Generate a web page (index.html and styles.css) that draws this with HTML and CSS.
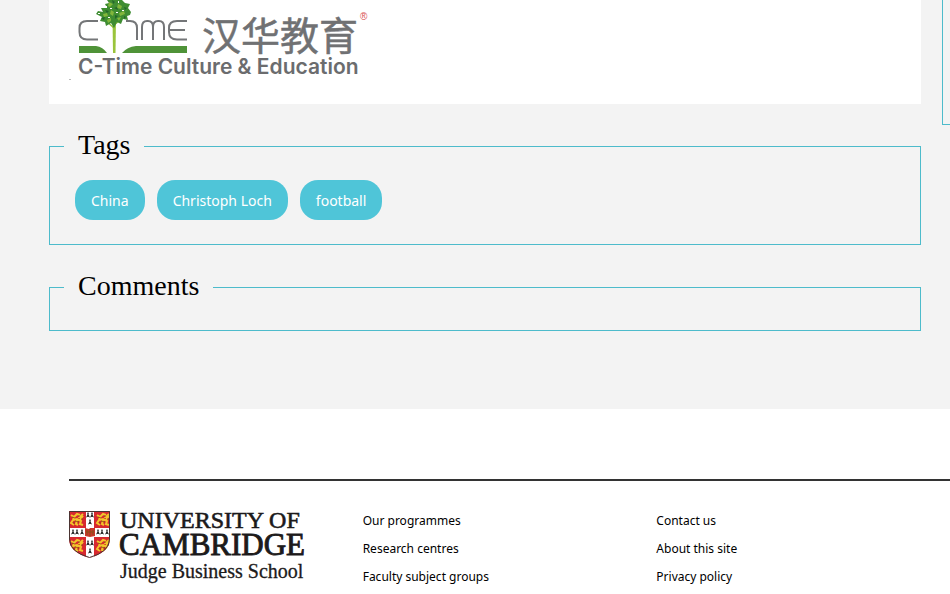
FILE: index.html
```html
<!DOCTYPE html>
<html lang="en">
<head>
<meta charset="utf-8">
<title>Cambridge Judge Business School</title>
<link rel="stylesheet" href="styles.css">
</head>
<body>
<div class="page">
  <main class="article">
    <div class="card">
      <svg class="partner-logo" width="304" height="84" viewBox="66 0 304 84" role="img" aria-label="C-Time Culture &amp; Education">
        <g fill="none" stroke="#747678" stroke-width="2">
          <path d="M98 21H87Q79.500 21 79.500 28V32Q79.500 39.500 87 39.500H98"/>
          <path d="M126 21H130Q137 21 137 28V40"/>
          <path d="M142 40V27Q142 21 147 21H148Q153 21 153 27V40M153 27Q153 21 158 21H159Q164 21 164 27V40"/>
          <path d="M187 21H177Q169 21 169 28V32Q169 39.500 177 39.500H187M169 30H185"/>
        </g>
        <path fill="#4f9338" d="M79 46H96Q103 47 107 53H79ZM187 46H136Q127 47 122 53H187Z"/>
        <path fill="#9ac43c" d="M112.500 18H116L115.500 53H113Z"/>
        <path fill="none" stroke="#8dbb35" stroke-width="1.500" d="M114 28L105 20M114 25L124 17M114 18V3"/>
        <path fill="#3f8d32" d="M107 0H122L125 3L130 4L128 8L131 12L130 15L127 16L128 20L123 19L121 24L117 22L114 28L111 23L106 26L105 22L100 21L102 17L96 14L98 11L103 12L101 8L107 8L105 4L109 3Z"/>
        <g fill="#82b63b">
          <path d="M109 2l4 2-3 3-2-1zM118 4l4 2-1 3-4-1zM103 14l4-1 1 3-4 1zM111 10l3 2-1 4-3-2zM119 13l5-2 1 3-5 2zM107 20l4-2v3l-3 2zM117 18l4-1-2 4z"/>
        </g>
        <g fill="#24662c">
          <path d="M112 0l3 2-2 2zM114 8l3-1 1 3zM105 10l4 1-2 2zM124 7l3 1-2 2zM115 15l3 1-3 3zM101 18l4-1-1 3zM124 16l2 1-2 2z"/>
        </g>
        <g fill="#fff"><path d="M105 6h2v2h-2zM110 8h2v1h-2zM122 10h2v1h-2zM108 17h2v1h-2zM116 12h2v1h-2zM118 1h1v2h-1zM98 13h2v1h-2z"/></g>
        <text class="logo-cjk" x="202" y="50">汉华教育</text>
        <text class="logo-mark" x="360" y="20">®</text>
        <text class="logo-latin" x="78" y="74">C-Time Culture &amp; Education</text>
        <path fill="#bbb" d="M69 79h2v1h-2z"/>
      </svg>
    </div>
    <fieldset class="panel">
      <legend>Tags</legend>
      <ul class="tags">
        <li><a href="#">China</a></li>
        <li><a href="#">Christoph Loch</a></li>
        <li><a href="#">football</a></li>
      </ul>
    </fieldset>
    <fieldset class="panel comments">
      <legend>Comments</legend>
    </fieldset>
  </main>
  <aside class="sidebar"></aside>
</div>
<footer class="footer">
  <div class="footer-grid">
    <a class="brand" href="#">
      <svg width="236" height="81" viewBox="0 -5 236 81" role="img" aria-label="University of Cambridge Judge Business School">
        <defs>
          <clipPath id="shield"><path d="M0 1H41V29Q41 42 20.500 48Q0 42 0 29Z"/></clipPath>
          <g id="lion">
            <path fill="none" stroke="#f3c52b" stroke-width="2" d="M2 3L5 5L4 8L8 7L12 9L11 12L14 13M5 5L8 2L11 3M4 8L2 11L5 13M8 8L7 12L9 13M11 8L13 5L11 5L14 2"/>
            <path fill="none" stroke="#75430f" stroke-width=".7" d="M3 5L6 6M6 9L10 10M9 4L11 4M4 11L6 11M12 7L14 7"/>
          </g>
          <path id="ermine" fill="#222" d="M0-3L.8-1.800L.5-.5L2 2.500L0 1.800L-2 2.500L-.5-.5L-.8-1.800Z"/>
        </defs>
        <g clip-path="url(#shield)">
          <path fill="#d7292f" d="M0 0H42V49H0Z"/>
          <use href="#lion" x="0" y="2"/><use href="#lion" x="26" y="2"/>
          <use href="#lion" x="0" y="28"/><use href="#lion" x="26" y="28"/>
          <path fill="#fff" d="M17 0H25V18H42V27H25V49H17V27H0V18H17Z"/>
          <use href="#ermine" x="19" y="5"/><use href="#ermine" x="23" y="5"/>
          <use href="#ermine" x="21" y="12"/>
          <use href="#ermine" x="4" y="22"/><use href="#ermine" x="8" y="22"/><use href="#ermine" x="13" y="22"/>
          <use href="#ermine" x="29" y="22"/><use href="#ermine" x="33" y="22"/><use href="#ermine" x="38" y="22"/>
          <use href="#ermine" x="19" y="33"/><use href="#ermine" x="23" y="33"/>
          <use href="#ermine" x="21" y="41"/>
          <path fill="#c9372b" d="M16 18L20 19L21 18L26 18V26L21 27L16 26Z"/>
          <path fill="none" stroke="#87501b" d="M18 20V25M21 19V26M24 20V25M17 22H25"/>
        </g>
        <path fill="none" stroke="#4a3432" d="M.5 1.500H40.500V29Q40.500 42 20.500 47.500Q.5 42 .5 29Z"/>
        <text class="brand-top" x="51" y="18">UNIVERSITY OF</text>
        <text class="brand-main" x="50" y="45">CAMBRIDGE</text>
        <text class="brand-sub" x="51" y="68">Judge Business School</text>
      </svg>
    </a>
    <ul class="links">
      <li><a href="#">Our programmes</a></li>
      <li><a href="#">Research centres</a></li>
      <li><a href="#">Faculty subject groups</a></li>
    </ul>
    <ul class="links">
      <li><a href="#">Contact us</a></li>
      <li><a href="#">About this site</a></li>
      <li><a href="#">Privacy policy</a></li>
    </ul>
  </div>
</footer>
</body>
</html>
```
FILE: styles.css
```css
* { box-sizing: border-box; }
body {
  margin: 0;
  background: #fff;
  color: #000;
  font-family: "Noto Sans", sans-serif;
  overflow-x: hidden;
}
ul { margin: 0; padding: 0; list-style: none; }
a { color: inherit; text-decoration: none; }
svg { display: block; }

.page {
  display: grid;
  grid-template-columns: 1fr 8px;
  column-gap: 21px;
  align-items: start;
  padding: 0 0 78px 49px;
  background: #f3f3f3;
}
.card { padding: 0 17px 20px; background: #fff; }
.logo-cjk { font: 39px "Noto Sans CJK SC", sans-serif; fill: #707173; stroke: #707173; stroke-width: .5px; }
.logo-mark { font: 10px "Liberation Sans", sans-serif; fill: #d95050; }
.logo-latin { font: 600 21px Inter, sans-serif; fill: #6b6c6e; }

.panel {
  min-width: 0;
  margin: 26px 0 0;
  padding: 0 14px;
  border: 1px solid #4dbbcb;
}
.panel legend {
  padding: 0 14px 2px;
  font: 28px/30px "Liberation Serif", serif;
}
.comments { padding-bottom: 27px; }
.tags {
  display: flex;
  flex-wrap: wrap;
  gap: 12px;
  padding: 18px 11px 24px;
}
.tags a {
  display: block;
  padding: 1px 16px 0;
  border-radius: 18px;
  background: #4fc5d8;
  color: #fff;
  font-size: 14px;
  line-height: 39px;
}
.sidebar {
  height: 125px;
  border: solid #4dbbcb;
  border-width: 0 0 1px 1px;
}

.footer { padding: 70px 0 0 69px; }
.footer-grid {
  display: grid;
  grid-template-columns: repeat(3, 1fr);
  padding-top: 24px;
  border-top: 2px solid #333;
}
.brand text { fill: #1c1a1b; font-family: "Liberation Serif", serif; }
.brand-top { font-size: 24px; stroke: #1c1a1b; stroke-width: .6px; }
.brand-main { font-size: 31px; stroke: #1c1a1b; stroke-width: .9px; }
.brand-sub { font-size: 20px; stroke: #1c1a1b; stroke-width: .3px; }
.links { padding-top: 2px; font-size: 12px; line-height: 28px; }
```
